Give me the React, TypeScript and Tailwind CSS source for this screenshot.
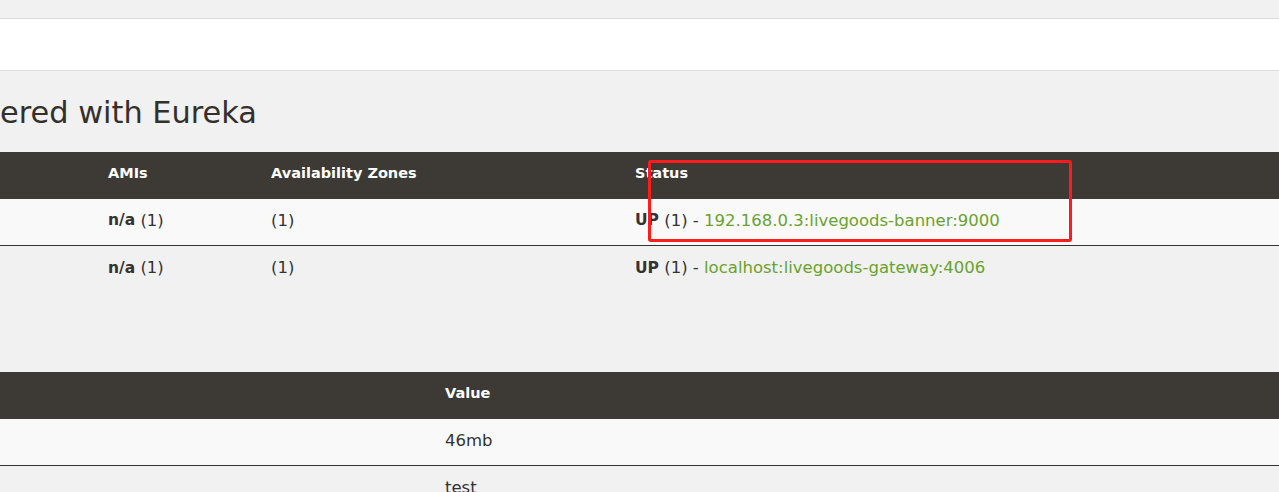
import React from "react";

const body = { fontFamily: '"DejaVu Sans", "Noto Sans", sans-serif' };
const head = { fontFamily: '"DejaVu Sans", "Noto Sans", sans-serif' };

type Instance = { ami: string; zones: string; host: string };

const instances: Instance[] = [
  { ami: "n/a", zones: "(1)", host: "192.168.0.3:livegoods-banner:9000" },
  { ami: "n/a", zones: "(1)", host: "localhost:livegoods-gateway:4006" },
];

const info = [{ value: "46mb" }, { value: "test" }];

export default function App() {
  return (
    <div className="relative w-[1279px] h-[492px] overflow-hidden bg-[#f1f1f1] text-[#333]" style={body}>
      <div className="h-[19px] border-b border-[#dcdcdc]" />
      <div className="h-[52px] bg-white border-b border-[#dcdcdc]" />

      <div className="h-[81px] flex items-center">
        <h1 className="text-[30.4px] leading-none text-[#33302b] mt-[3px]" style={head}>
          ered with Eureka
        </h1>
      </div>

      {/* instances table */}
      <div className="grid grid-cols-[100px_163px_364px_1fr] text-[16.5px]">
        <div className="contents font-bold text-white text-[14.5px]">
          {["", "AMIs", "Availability Zones", "Status"].map((h, i) => (
            <div key={i} className="h-[47px] bg-[#3d3a35] px-2 pb-[4px] flex items-center">
              {h}
            </div>
          ))}
        </div>
        {instances.map((r, i) => {
          const bg = i % 2 === 0 ? "bg-[#f9f9f9]" : "bg-[#f1f1f1]";
          const line = i === 0 ? "border-b border-[#333]" : "";
          const cell = `h-[47px] px-2 pb-[2px] flex items-center ${bg} ${line}`;
          return (
            <div key={i} className="contents">
              <div className={cell} />
              <div className={cell}>
                <b className="text-[15.5px]">{r.ami}</b>&nbsp;(1)
              </div>
              <div className={cell}>{r.zones}</div>
              <div className={cell}>
                <b className="text-[15.5px]">UP</b>&nbsp;(1) -&nbsp;<span className="text-[#6aa22e]">{r.host}</span>
              </div>
            </div>
          );
        })}
      </div>

      <div className="h-[79px]" />

      {/* general info table */}
      <div className="grid grid-cols-[437px_1fr] text-[16.5px]">
        <div className="h-[47px] bg-[#3d3a35]" />
        <div className="h-[47px] bg-[#3d3a35] px-2 pb-[4px] flex items-center font-bold text-white text-[14.5px]">Value</div>
        {info.map((r, i) => {
          const bg = i % 2 === 0 ? "bg-[#f9f9f9]" : "bg-[#f1f1f1]";
          const line = i === 0 ? "border-b border-[#333]" : "";
          const cell = `h-[47px] px-2 pb-[2px] flex items-center ${bg} ${line}`;
          return (
            <div key={i} className="contents">
              <div className={cell} />
              <div className={cell}>{r.value}</div>
            </div>
          );
        })}
      </div>

      {/* red annotation box */}
      <div className="absolute left-[648px] top-[160px] w-[424px] h-[82px] border-[3px] border-[#ff1c1c] rounded-[3px]" />
    </div>
  );
}
